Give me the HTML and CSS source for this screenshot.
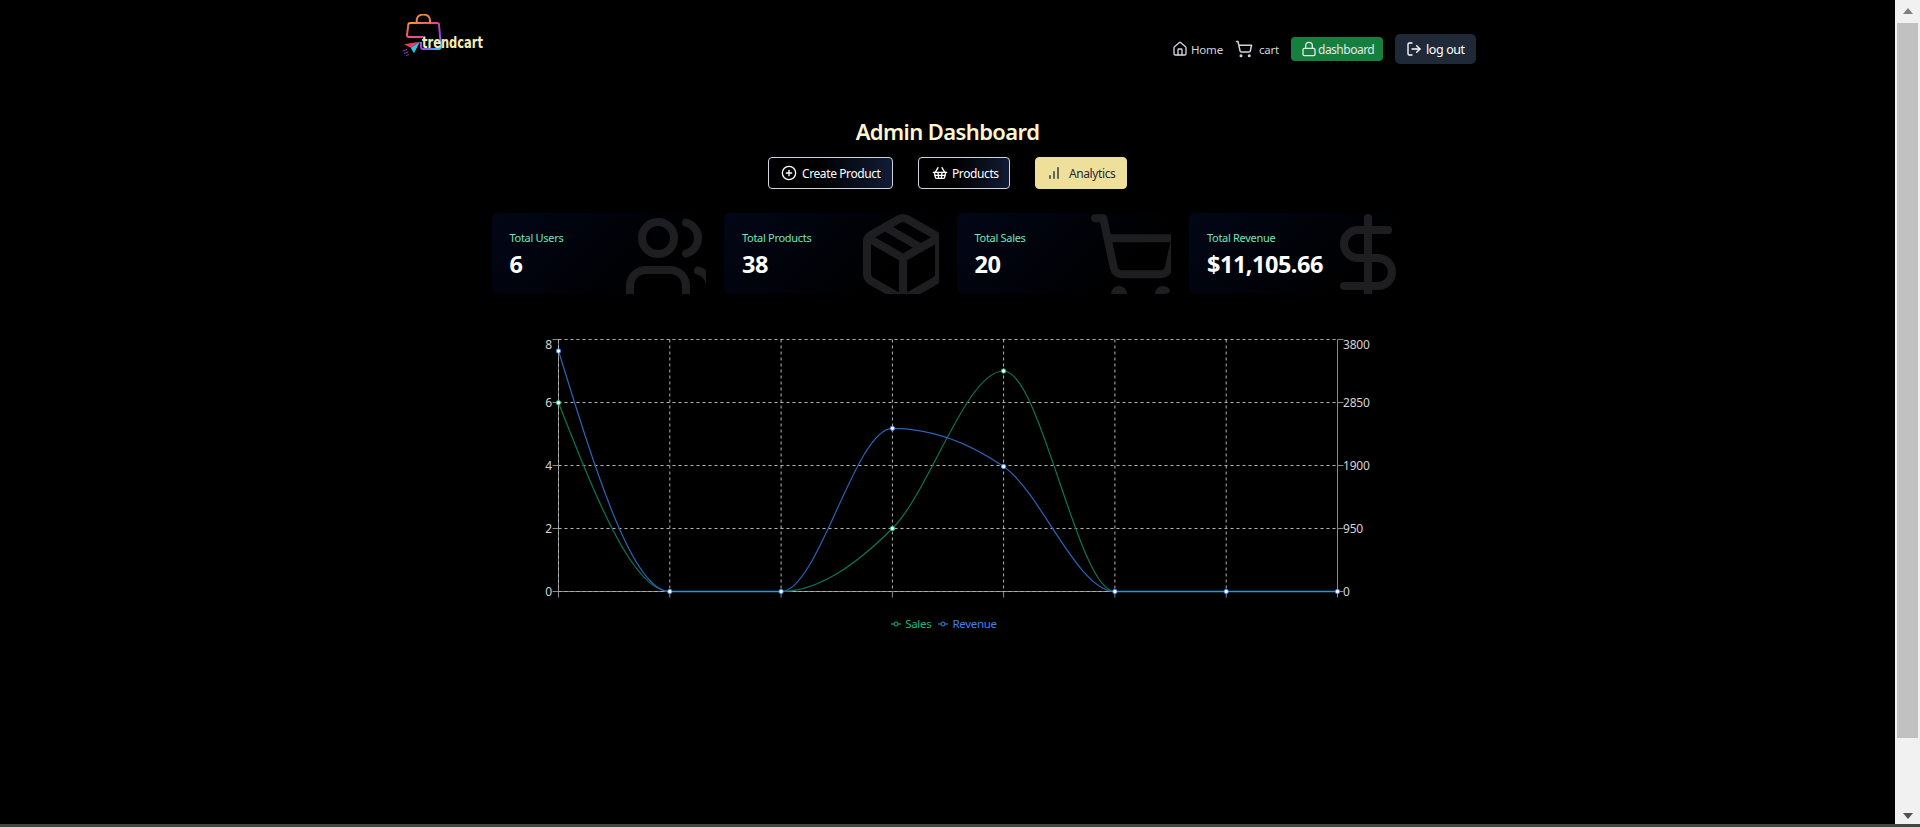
FILE: index.html
```html
<!DOCTYPE html>
<html lang="en">
<head>
<meta charset="utf-8">
<title>trendcart Admin Dashboard</title>
<link rel="stylesheet" href="styles.css">
</head>
<body>
<div class="window">
  <main class="main">
    <nav class="nav">
      <a class="logo" href="#">
        <svg class="logo-svg" viewBox="0 0 90 45" width="90" height="45">
          <defs>
            <linearGradient id="bag" x1="0" y1="0" x2="1" y2="1">
              <stop offset="0" stop-color="#f59e2b"/>
              <stop offset=".35" stop-color="#ee4b7e"/>
              <stop offset=".7" stop-color="#a03ff0"/>
              <stop offset="1" stop-color="#22d3ee"/>
            </linearGradient>
            <linearGradient id="bag-left" x1="0" y1="0" x2="1" y2="1">
              <stop offset="0" stop-color="#f0703c"/>
              <stop offset="1" stop-color="#e83fa8"/>
            </linearGradient>
          </defs>
          <path d="M6.3 11 a2 2 0 0 1 2-2 H35 a2 2 0 0 1 2 2 L39 32 a3 3 0 0 1 -3 3 H21 a2 2 0 0 1 -2-2 V28" fill="none" stroke="url(#bag)" stroke-width="2"/>
          <path d="M6.3 11 L5 21 a2 2 0 0 0 2 2 H21" fill="none" stroke="url(#bag-left)" stroke-width="2"/>
          <path d="M14.7 9.3 V6 a6.6 5.5 0 0 1 13.3 0 V9.3" fill="none" stroke="#ec8a3a" stroke-width="2"/>
          <polygon points="2,30.3 18,27.7 8.7,33.7" fill="#ef3a5a"/>
          <polygon points="18,27.7 12,39.3 8.7,33.7" fill="#2cc4e8"/>
          <path d="M.7 37 L5 35.5 M2 39.5 L6 38 M4 41.5 L7 40.5" stroke="#8b35c9" stroke-width="1"/>
        </svg>
        <span class="logo-text">trendcart</span>
      </a>
      <div class="nav-links">
        <a class="nav-link" href="#">
          <svg class="ic ic-16" viewBox="0 0 24 24"><path d="M15 21v-8a1 1 0 0 0-1-1h-4a1 1 0 0 0-1 1v8"/><path d="M3 10a2 2 0 0 1 .709-1.528l7-5.999a2 2 0 0 1 2.582 0l7 5.999A2 2 0 0 1 21 10v9a2 2 0 0 1-2 2H5a2 2 0 0 1-2-2z"/></svg>
          <span>Home</span>
        </a>
        <a class="nav-link nav-cart" href="#">
          <svg class="ic ic-18" viewBox="0 0 24 24"><circle cx="8" cy="21" r="1"/><circle cx="19" cy="21" r="1"/><path d="M2.05 2.05h2l2.66 12.42a2 2 0 0 0 2 1.58h9.78a2 2 0 0 0 1.95-1.57l1.65-7.43H5.12"/></svg>
          <span>cart</span>
        </a>
        <a class="nav-btn nav-dash" href="#">
          <svg class="ic ic-16" viewBox="0 0 24 24"><rect x="3" y="11" width="18" height="11" rx="2"/><path d="M7 11V7a5 5 0 0 1 10 0v4"/></svg>
          <span>dashboard</span>
        </a>
        <a class="nav-btn nav-out" href="#">
          <svg class="ic ic-16" viewBox="0 0 24 24"><path d="M9 21H5a2 2 0 0 1-2-2V5a2 2 0 0 1 2-2h4"/><polyline points="16 17 21 12 16 7"/><line x1="21" y1="12" x2="9" y2="12"/></svg>
          <span>log out</span>
        </a>
      </div>
    </nav>

    <h1 class="title">Admin Dashboard</h1>

    <div class="tabs">
      <button class="tab tab-create">
        <svg class="ic ic-16" viewBox="0 0 24 24"><circle cx="12" cy="12" r="10"/><path d="M8 12h8"/><path d="M12 8v8"/></svg>
        <span>Create Product</span>
      </button>
      <button class="tab tab-products">
        <svg class="ic ic-16" viewBox="0 0 24 24"><path d="m15 11-1 9"/><path d="m19 11-4-7"/><path d="M2 11h20"/><path d="m3.5 11 1.6 7.4a2 2 0 0 0 2 1.6h9.8a2 2 0 0 0 2-1.6l1.7-7.4"/><path d="M4.5 15.5h15"/><path d="m5 11 4-7"/><path d="m9 11 1 9"/></svg>
        <span>Products</span>
      </button>
      <button class="tab tab-active">
        <svg class="ic ic-16" viewBox="0 0 24 24"><path d="M12 20V10"/><path d="M18 20V4"/><path d="M6 20v-4"/></svg>
        <span>Analytics</span>
      </button>
    </div>

    <section class="cards">
      <article class="card">
        <div class="card-label">Total Users</div>
        <div class="card-value">6</div>
        <svg class="card-icon" viewBox="0 0 24 24"><path d="M16 21v-2a4 4 0 0 0-4-4H6a4 4 0 0 0-4 4v2"/><circle cx="9" cy="7" r="4"/><path d="M22 21v-2a4 4 0 0 0-3-3.87"/><path d="M16 3.13a4 4 0 0 1 0 7.75"/></svg>
      </article>
      <article class="card">
        <div class="card-label">Total Products</div>
        <div class="card-value">38</div>
        <svg class="card-icon" viewBox="0 0 24 24"><path d="m7.5 4.27 9 5.15"/><path d="M21 8a2 2 0 0 0-1-1.73l-7-4a2 2 0 0 0-2 0l-7 4A2 2 0 0 0 3 8v8a2 2 0 0 0 1 1.73l7 4a2 2 0 0 0 2 0l7-4A2 2 0 0 0 21 16Z"/><path d="m3.3 7 8.7 5 8.7-5"/><path d="M12 22V12"/></svg>
      </article>
      <article class="card">
        <div class="card-label">Total Sales</div>
        <div class="card-value">20</div>
        <svg class="card-icon" viewBox="0 0 24 24"><circle cx="8" cy="21" r="1"/><circle cx="19" cy="21" r="1"/><path d="M2.05 2.05h2l2.66 12.42a2 2 0 0 0 2 1.58h9.78a2 2 0 0 0 1.95-1.57l1.65-7.43H5.12"/></svg>
      </article>
      <article class="card">
        <div class="card-label">Total Revenue</div>
        <div class="card-value">$11,105.66</div>
        <svg class="card-icon" viewBox="0 0 24 24"><line x1="12" x2="12" y1="2" y2="22"/><path d="M17 5H9.5a3.5 3.5 0 0 0 0 7h5a3.5 3.5 0 0 1 0 7H6"/></svg>
      </article>
    </section>

    <svg class="chart" viewBox="511 330 873 280" width="873" height="280">
      <g class="axis">
        <path d="M558.5 339.5V591.5M552.5 339.5H558.5M552.5 402.5H558.5M552.5 465.5H558.5M552.5 528.5H558.5M552.5 591.5H558.5"/>
        <path d="M1337.5 339.5V591.5M1337.5 339.5H1343.5M1337.5 402.5H1343.5M1337.5 465.5H1343.5M1337.5 528.5H1343.5M1337.5 591.5H1343.5"/>
        <path d="M558.5 591.5H1337.5M558.5 591.5V597.5M669.8 591.5V597.5M781.1 591.5V597.5M892.4 591.5V597.5M1003.6 591.5V597.5M1114.9 591.5V597.5M1226.2 591.5V597.5M1337.5 591.5V597.5"/>
      </g>
      <g class="grid">
        <path d="M558.5 339.5H1337.5M558.5 402.5H1337.5M558.5 465.5H1337.5M558.5 528.5H1337.5M558.5 591.5H1337.5"/>
        <path d="M558.5 339.5V591.5M669.8 339.5V591.5M781.1 339.5V591.5M892.4 339.5V591.5M1003.6 339.5V591.5M1114.9 339.5V591.5M1226.2 339.5V591.5"/>
      </g>
      <g class="tick-l">
        <text x="552" y="349">8</text><text x="552" y="407">6</text><text x="552" y="470">4</text><text x="552" y="533">2</text><text x="552" y="596">0</text>
      </g>
      <g class="tick-r">
        <text x="1343" y="349">3800</text><text x="1343" y="407">2850</text><text x="1343" y="470">1900</text><text x="1343" y="533">950</text><text x="1343" y="596">0</text>
      </g>
      <path class="line line-sales" d="M558.5 402.7C595.6 497.1 632.7 591.5 669.8 591.5L781.1 591.5C818.2 591.5 855.3 565.3 892.4 528.5C929.5 491.7 966.5 371 1003.6 371C1040.7 371 1077.8 591.5 1114.9 591.5"/>
      <path class="line line-rev" d="M558.5 351C595.6 471.2 632.7 591.5 669.8 591.5M781.1 591.5C818.2 591.5 855.3 428.3 892.4 428.3C929.5 428.3 966.5 441 1003.6 466.5C1040.7 492 1077.8 591.5 1114.9 591.5"/>
      <path class="line line-zero" d="M669.8 591.5H781.1M1114.9 591.5H1337.5"/>
      <g class="dots-sales">
        <circle cx="558.5" cy="402.7" r="2.2"/><circle cx="892.4" cy="528.5" r="2.2"/><circle cx="1003.6" cy="371" r="2.2"/>
      </g>
      <g class="dots-rev">
        <circle cx="558.5" cy="351" r="2.2"/><circle cx="669.8" cy="591.5" r="2.2"/><circle cx="781.1" cy="591.5" r="2.2"/><circle cx="892.4" cy="428.3" r="2.2"/><circle cx="1003.6" cy="466.5" r="2.2"/><circle cx="1114.9" cy="591.5" r="2.2"/><circle cx="1226.2" cy="591.5" r="2.2"/><circle cx="1337.5" cy="591.5" r="2.2"/>
      </g>
    </svg>

    <ul class="legend">
      <li class="legend-item legend-sales">
        <svg class="legend-icon" viewBox="0 0 10 10"><path d="M0 5H10"/><circle cx="5" cy="5" r="2"/></svg>
        <span>Sales</span>
      </li>
      <li class="legend-item legend-rev">
        <svg class="legend-icon" viewBox="0 0 10 10"><path d="M0 5H10"/><circle cx="5" cy="5" r="2"/></svg>
        <span>Revenue</span>
      </li>
    </ul>
  </main>
  <aside class="scrollbar">
    <div class="arrow arrow-up"></div>
    <div class="thumb"></div>
    <div class="arrow arrow-down"></div>
  </aside>
</div>
<div class="strip"></div>
</body>
</html>
```
FILE: styles.css
```css
* { box-sizing: border-box; }
html, body { margin: 0; height: 100%; background: #000; overflow: hidden; }
body {
  display: flex;
  flex-direction: column;
  font-family: "Noto Sans", "Open Sans", sans-serif;
  color: #fff;
}
a { color: inherit; text-decoration: none; }
span { white-space: nowrap; }

.window { flex: 1; display: flex; min-height: 0; }
.main { flex: 1; min-width: 0; display: flex; flex-direction: column; align-items: center; }
.strip { height: 3px; background: #444; }

.scrollbar {
  width: 25px;
  background: #f1f1f1;
  display: flex;
  flex-direction: column;
  align-items: center;
  padding: 8px 0 5px;
}
.arrow { width: 0; height: 0; border-left: 5.5px solid transparent; border-right: 5.5px solid transparent; }
.arrow-up { border-bottom: 6px solid #808080; }
.arrow-down { border-top: 6px solid #505050; margin-top: auto; }
.thumb { width: 21px; height: 715px; background: #c1c1c1; margin-top: 9px; }

.nav {
  align-self: stretch;
  height: 72px;
  padding: 0 419px 0 400px;
  display: flex;
  justify-content: space-between;
  flex-shrink: 0;
}
.logo { display: block; position: relative; width: 92px; height: 59px; padding-top: 14px; }
.logo-svg { display: block; margin-left: 2px; }
.logo-text {
  position: absolute;
  left: 22px;
  top: 34px;
  font-family: "DejaVu Sans Condensed", "DejaVu Sans", sans-serif;
  font-weight: 700;
  font-size: 15px;
  line-height: 18px;
  color: #f3edb4;
  transform: scaleX(.85);
  transform-origin: left center;
}
.nav-links { display: flex; align-items: center; height: 64px; padding-top: 34px; align-self: flex-start; }

.ic { fill: none; stroke: currentColor; stroke-width: 2; stroke-linecap: round; stroke-linejoin: round; flex-shrink: 0; display: block; }
.ic-16 { width: 16px; height: 16px; }
.ic-18 { width: 18px; height: 18px; }

.nav-link { display: flex; align-items: center; gap: 3px; font-size: 11.5px; color: #d1d5db; margin-right: 12px; letter-spacing: -.2px; }
.nav-cart { gap: 6px; }
.nav-btn { display: flex; align-items: center; border-radius: 4px; }
.nav-dash { background: #15803d; color: #e5e7eb; height: 24px; width: 92px; gap: 1px; padding-left: 10px; margin-right: 12px; font-size: 12px; letter-spacing: -.5px; }
.nav-out { background: #1f2937; color: #fff; height: 30px; width: 81px; gap: 4px; padding-left: 11px; border-radius: 5px; font-size: 12.5px; letter-spacing: -.4px; }

.title {
  margin: 43px 0 0;
  font-size: 22px;
  line-height: 32px;
  font-weight: 600;
  color: #fdf5d0;
  letter-spacing: -.6px;
}
.tabs { display: flex; gap: 25px; margin-top: 10px; }
.tab {
  font: inherit;
  font-size: 12px;
  letter-spacing: -.4px;
  height: 32px;
  display: flex;
  align-items: center;
  padding: 0;
  border-radius: 4px;
  border: 1px solid #d1d5db;
  color: #fff;
  background: linear-gradient(90deg, #000 40%, #111c35 100%);
}
.tab-create { width: 125px; gap: 5px; padding-left: 12px; }
.tab-products { width: 92px; gap: 4px; padding-left: 13px; }
.tab-active { width: 92px; gap: 7px; padding-left: 10px; background: #eedf9b; border-color: #eedf9b; color: #1f2937; }

.cards { display: flex; gap: 18px; margin-top: 24px; width: 912px; }
.card {
  position: relative;
  overflow: hidden;
  flex: 1;
  height: 81px;
  border-radius: 6px;
  background: linear-gradient(135deg, #020617, #000 75%);
  padding: 15px 18px;
}
.card-label { font-size: 11px; line-height: 20px; color: #6ee7b7; letter-spacing: -.3px; }
.card-value { font-size: 23.5px; line-height: 32px; font-weight: 700; letter-spacing: -.5px; }
.card-icon {
  position: absolute;
  right: -12px;
  bottom: -12px;
  width: 96px;
  height: 96px;
  fill: none;
  stroke: #1e1e20;
  stroke-width: 2;
  stroke-linecap: round;
  stroke-linejoin: round;
}

.chart { display: block; margin-top: 36px; flex-shrink: 0; }
.axis path { fill: none; stroke: #8a8a8a; }
.grid path { fill: none; stroke: #b4b4b4; stroke-dasharray: 3 3; }
.chart text { font-size: 12px; fill: #d4d4d4; letter-spacing: -.2px; }
.tick-l text { text-anchor: end; }
.line { fill: none; stroke-width: 1.2; }
.line-sales { stroke: #047857; }
.line-rev { stroke: #2b63b8; }
.line-zero { stroke: #3d8fc7; stroke-width: 1.5; }
.dots-sales circle { fill: #fff; stroke: #10b981; stroke-width: 1; }
.dots-rev circle { fill: #fff; stroke: #3b82f6; stroke-width: 1; }

.legend { list-style: none; margin: 6px 7px 0 0; padding: 0; display: flex; gap: 7px; font-size: 11.5px; letter-spacing: -.3px; }
.legend-item { display: flex; align-items: center; gap: 4px; }
.legend-icon { width: 10px; height: 10px; stroke: currentColor; }
.legend-icon path { fill: none; }
.legend-icon circle { fill: #000; }
.legend-sales { color: #10b981; }
.legend-rev { color: #3b82f6; }
```
